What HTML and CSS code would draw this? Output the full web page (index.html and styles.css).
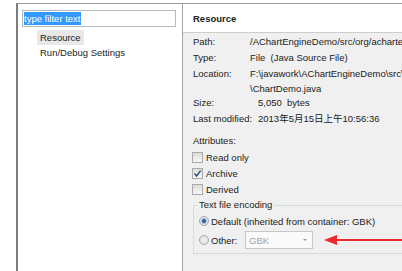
FILE: index.html
```html
<!DOCTYPE html>
<html lang="en">
<head>
  <meta charset="UTF-8">
  <title>Properties for ChartDemo.java</title>
  <link rel="stylesheet" href="styles.css">
</head>
<body>
  <div class="window">
    <div class="dialog">
      <div class="nav">
        <div class="filter"><span class="sel">type filter text</span></div>
        <ul class="tree">
          <li class="current">Resource</li>
          <li>Run/Debug Settings</li>
        </ul>
      </div>

      <div class="page">
        <div class="page-title">Resource</div>
        <div class="page-body">
          <div class="info info-top">
            <span class="lbl">Path:</span>
            <span class="val">/AChartEngineDemo/src/org/achartengine/chartdemo/demo/chart/ChartDemo.java</span>
            <span class="lbl">Type:</span>
            <span class="val">File&nbsp; (Java Source File)</span>
            <span class="lbl">Location:</span>
            <span class="val">
              <span class="line">F:\javawork\AChartEngineDemo\src\org\achartengine\chartdemo\demo\chart</span>
              <span class="line line-wrap">\ChartDemo.java</span>
            </span>
          </div>
          <div class="info info-bottom">
            <span class="lbl">Size:</span>
            <span class="val">5,050&nbsp; bytes</span>
            <span class="lbl">Last modified:</span>
            <span class="val">2013年5月15日上午10:56:36</span>
          </div>

          <div class="attrs-title">Attributes:</div>
          <div class="check"><span class="box"></span>Read only</div>
          <div class="check">
            <span class="box">
              <svg width="9" height="9" viewBox="0 0 9 9"><path d="M1.5 4.5 L3.6 7 L7.6 1.6" fill="none" stroke="#2b4b86" stroke-width="1.4"/></svg>
            </span>Archive
          </div>
          <div class="check"><span class="box"></span>Derived</div>

          <fieldset class="encoding">
            <legend>Text file encoding</legend>
            <div class="radio-row"><span class="radio on"></span>Default (inherited from container: GBK)</div>
            <div class="radio-row other-row">
              <span class="radio"></span>
              <span class="other-label">Other:</span>
              <span class="combo"><span class="combo-text">GBK</span><span class="combo-arrow"></span></span>
              <svg class="arrow" width="78" height="12" viewBox="0 0 78 12">
                <line x1="10" y1="6" x2="78" y2="6" stroke="#e8282c" stroke-width="2"/>
                <polygon points="0,6 13,1 13,11" fill="#e8282c"/>
              </svg>
              <span class="edge"></span>
            </div>
          </fieldset>
        </div>
      </div>
    </div>
  </div>
</body>
</html>
```

FILE: styles.css
```css
body {
  margin: 0;
  background: #fff;
  font-family: "Liberation Sans", "Noto Sans CJK SC", sans-serif;
  font-size: 9.5px;
  color: #222;
  overflow: hidden;
}
.window {
  padding: 3px 0 0 16px;
  height: 268px;
}
.dialog {
  display: flex;
  width: 386px;
  height: 267px;
  border-top: 1px solid #9a9a9a;
  border-left: 2px solid #7d7d7d;
}
.nav {
  width: 164px;
  flex: none;
  background: #fff;
}
.filter {
  margin: 6px 0 0 4px;
  width: 151px;
  height: 15px;
  border: 1px solid #b5b9c0;
  padding-left: 1px;
}
.sel {
  display: inline-block;
  margin-top: 1px;
  line-height: 13px;
  background: #3399ff;
  color: #fff;
}
.tree {
  list-style: none;
  margin: 3px 0 0 19px;
  padding: 0;
}
.tree li {
  display: table;
  line-height: 15px;
  padding: 0 3px;
}
.tree .current {
  background: #e8e8e8;
}
.page {
  flex: 1;
  min-width: 0;
  background: #f0f0f0;
  border-left: 1px solid #a3a3a3;
  overflow: hidden;
}
.page-title {
  height: 28px;
  line-height: 29px;
  padding-left: 10px;
  background: #fff;
  border-bottom: 1px solid #cdcdcd;
  font-weight: bold;
}
.page-body {
  padding: 1px 0 0 10px;
}
.info {
  display: grid;
  line-height: 16px;
  white-space: nowrap;
}
.info-top {
  grid-template-columns: 57px 1fr;
}
.info-bottom {
  grid-template-columns: 65px 1fr;
}
.line {
  display: block;
}
.line-wrap {
  line-height: 13px;
}
.attrs-title {
  margin-top: 6px;
  line-height: 16px;
}
.check {
  display: flex;
  align-items: center;
  height: 16px;
}
.box {
  width: 9px;
  height: 9px;
  margin: 0 3px 0 -1px;
  border: 1px solid #a9a9a9;
  background: linear-gradient(#dcdcdc, #f6f6f6);
  display: flex;
  align-items: center;
  justify-content: center;
}
.encoding {
  margin: 0 -60px 0 0;
  padding: 0 0 4px 5px;
  border: 1px solid #d4dbe0;
}
.encoding legend {
  padding: 0 2px;
  margin-left: -2px;
  line-height: 16px;
}
.radio-row {
  display: flex;
  align-items: center;
  height: 16px;
}
.radio {
  width: 8px;
  height: 8px;
  margin-right: 2px;
  border: 1px solid #a5a5a5;
  border-radius: 50%;
  background: radial-gradient(circle, #f4f4f4 0, #dadada 100%);
}
.radio.on {
  background: radial-gradient(circle, #2e4f7c 0, #4e7fb3 2px, #dfe6ee 3px);
}
.other-row {
  height: 18px;
  margin-top: 2px;
}
.other-label {
  width: 34px;
}
.combo {
  display: flex;
  align-items: center;
  justify-content: space-between;
  width: 65px;
  height: 16px;
  padding: 0 5px 0 3px;
  box-sizing: content-box;
  width: 58px;
  background: #fafafa;
  border: 1px solid #c7c7c7;
  color: #a3a3a3;
}
.combo-arrow {
  width: 0;
  height: 0;
  border-left: 2px solid transparent;
  border-right: 2px solid transparent;
  border-top: 2px solid #9a9a9a;
}
.arrow {
  margin-left: 11px;
  flex: none;
}
.edge {
  width: 10px;
  height: 16px;
  border: 1px solid #c7c7c7;
  background: #fbfbfb;
  flex: none;
}
```
